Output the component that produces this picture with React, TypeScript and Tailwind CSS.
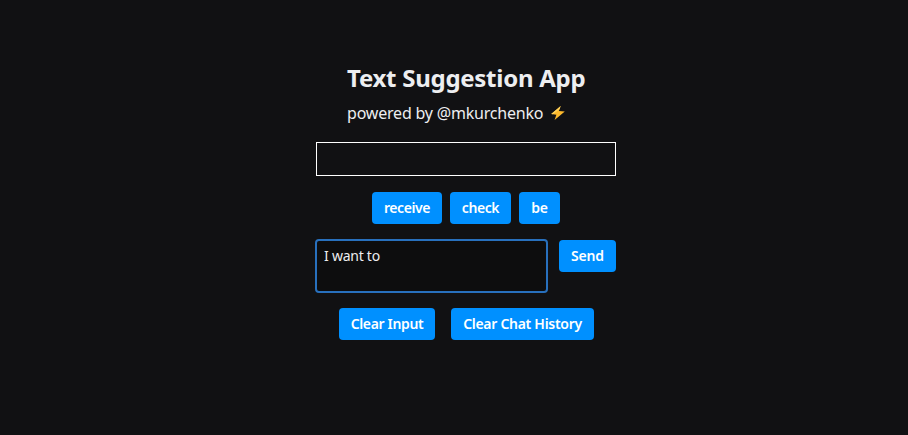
import { useState } from 'react';
import type { ReactNode } from 'react';

function Button({ className, children, onClick }: { className: string; children: ReactNode; onClick?: () => void }) {
  return (
    <button
      type="button"
      onClick={onClick}
      className={`flex h-8 shrink-0 items-center justify-center whitespace-nowrap rounded bg-[#0090ff] text-sm font-semibold text-white ${className}`}
    >
      {children}
    </button>
  );
}

function Bolt() {
  return (
    <svg viewBox="0 0 16 16" className="ml-[7px] h-4 w-4" aria-hidden="true">
      <path d="M10.7 1 1.2 9.1l5.2.6L4.6 15l10.2-8.4-5.9-.5z" fill="#fdb92c" />
      <path d="M10.7 1 1.2 9.1l1.7.2L9.6 3.9z" fill="#ffd35c" />
    </svg>
  );
}

export default function App() {
  const [text, setText] = useState('I want to');
  return (
    <main className="flex h-[435px] w-full flex-col bg-[#111113] pl-[316px] pt-[63px] font-['Noto_Sans','Open_Sans',sans-serif] text-[#edeef0]">
      <div className="flex w-[300px] flex-col">
        <header className="pl-[31px]">
          <h1 className="h-[30px] whitespace-nowrap text-2xl leading-[30px] font-bold tracking-[-0.27px]">Text Suggestion App</h1>
          <p className="mt-2 flex h-6 items-center whitespace-nowrap text-base leading-6 tracking-[-0.2px]">
            powered by @mkurchenko
            <Bolt />
          </p>
        </header>
        <div className="mt-[17px] h-[34px] border border-white" />
        <div className="mt-4 flex justify-center gap-2">
          <Button className="w-[70px] tracking-[-0.4px]">receive</Button>
          <Button className="w-[61px] tracking-[-0.4px]">check</Button>
          <Button className="w-[41px] tracking-[-0.3px]">be</Button>
        </div>
        <div className="mt-4 flex items-start justify-between">
          <textarea
            value={text}
            onChange={(e) => setText(e.target.value)}
            className="h-[52px] w-[231px] resize-none rounded-[3px] bg-[#0d0d0e] px-2 py-[6px] text-sm leading-5 tracking-[-0.25px] outline-2 -outline-offset-1 outline-[#2870bd]"
          />
          <Button className="w-[57px] tracking-[-0.15px]">Send</Button>
        </div>
        <div className="mt-4 flex gap-4 pl-[23px]">
          <Button className="w-24 tracking-[-0.35px]" onClick={() => setText('')}>Clear Input</Button>
          <Button className="w-[143px] tracking-[-0.29px]">Clear Chat History</Button>
        </div>
      </div>
    </main>
  );
}
